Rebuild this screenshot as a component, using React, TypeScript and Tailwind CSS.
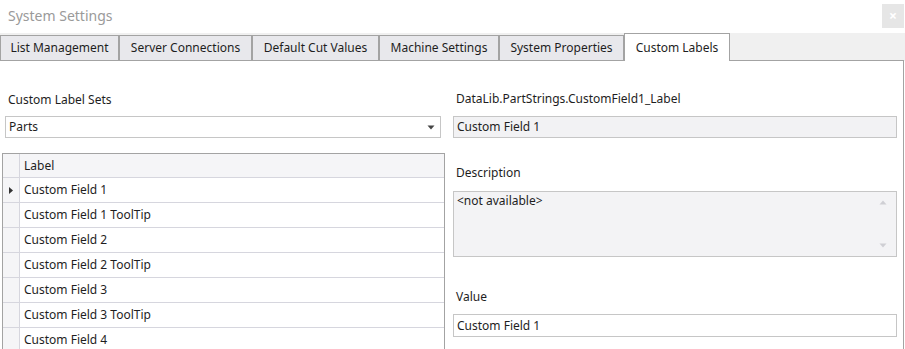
import React from 'react';

const tabs = [
  { label: 'List Management', w: 'w-[119px]' },
  { label: 'Server Connections', w: 'w-[133px]' },
  { label: 'Default Cut Values', w: 'w-[127px]' },
  { label: 'Machine Settings', w: 'w-[120px]' },
  { label: 'System Properties', w: 'w-[125px]' },
];

const rows = [
  'Custom Field 1',
  'Custom Field 1 ToolTip',
  'Custom Field 2',
  'Custom Field 2 ToolTip',
  'Custom Field 3',
  'Custom Field 3 ToolTip',
  'Custom Field 4',
];

export default function App() {
  return (
    <div className="w-[905px] h-[349px] overflow-hidden bg-white text-[12px] text-[#1e1e1e] font-['Noto_Sans',sans-serif]">
      {/* title bar */}
      <div className="h-[33px] flex justify-between items-start">
        <div className="pl-[8px] pt-[5px] text-[14px] text-[#9a9a9a]">System Settings</div>
        <div className="mt-[4px] mr-[1px] w-[22px] h-[24px] bg-[#e6e6e6] flex items-center justify-center text-white text-[14px] font-bold leading-none">
          ×
        </div>
      </div>

      {/* tab strip */}
      <div className="h-[28px] bg-[#f0f0f0] flex items-end">
        {tabs.map((t) => (
          <div
            key={t.label}
            className={`${t.w} h-[26px] shrink-0 border border-[#a3a3a3] bg-[#e8e8ec] flex items-center justify-center`}
          >
            {t.label}
          </div>
        ))}
        <div className="w-[106px] h-[28px] shrink-0 border border-b-0 border-[#a3a3a3] bg-white flex items-center justify-center">
          Custom Labels
        </div>
        <div className="flex-1 h-[1px] mr-[1px] bg-[#a3a3a3]" />
      </div>

      {/* content */}
      <div className="flex h-[288px] mr-[1px] border-r border-[#a3a3a3] overflow-hidden">
        {/* left column */}
        <div className="w-[447px] shrink-0 flex flex-col">
          <div className="shrink-0 pl-[8px] pt-[31px] h-[55px] leading-[16px]">Custom Label Sets</div>
          <div className="shrink-0 ml-[5px] w-[436px] h-[22px] border border-[#c6c6c6] flex items-center justify-between pl-[3px] pr-[5px]">
            <span>Parts</span>
            <svg width="8" height="5" viewBox="0 0 8 5">
              <path d="M0.5 0.5h7L4 4.5z" fill="#444" />
            </svg>
          </div>
          <div className="shrink-0 mt-[15px] ml-[2px] w-[443px] border-t border-x border-[#a3a3a3] flex flex-col">
            <div className="shrink-0 flex h-[24px] border-b border-[#d6d6de]">
              <div className="w-[17px] bg-[#f5f5f7] border-r border-[#d6d6de]" />
              <div className="flex-1 pl-[4px] flex items-center bg-[#f5f5f7]">Label</div>
            </div>
            {rows.map((r, i) => (
              <div key={r} className="shrink-0 flex h-[25px] border-b border-[#d6d6de]">
                <div className="w-[17px] bg-[#f5f5f7] border-r border-[#d6d6de] flex items-center justify-center">
                  {i === 0 && (
                    <svg width="4" height="7" viewBox="0 0 4 7">
                      <path d="M0 0L4 3.5L0 7z" fill="#333" />
                    </svg>
                  )}
                </div>
                <div className="flex-1 pl-[4px] flex items-center">{r}</div>
              </div>
            ))}
          </div>
        </div>

        {/* right column */}
        <div className="w-[444px] shrink-0 ml-[6px] flex flex-col">
          <div className="shrink-0 pl-[3px] pt-[30px] h-[55px] leading-[16px]">DataLib.PartStrings.CustomField1_Label</div>
          <div className="shrink-0 h-[22px] border border-[#c6c6c6] bg-[#f2f2f4] flex items-center pl-[3px]">Custom Field 1</div>
          <div className="shrink-0 pl-[3px] pt-[27px] h-[53px] leading-[16px]">Description</div>
          <div className="shrink-0 h-[66px] border border-[#c6c6c6] bg-[#f3f3f5] flex justify-between pl-[3px] pr-[9px]">
            <span className="leading-[16px] pt-[1px]">&lt;not available&gt;</span>
            <div className="flex flex-col justify-between py-[8px]">
              <svg width="8" height="5" viewBox="0 0 8 5">
                <path d="M0.5 4.5h7L4 0.5z" fill="#cfcfd4" />
              </svg>
              <svg width="8" height="5" viewBox="0 0 8 5">
                <path d="M0.5 0.5h7L4 4.5z" fill="#cfcfd4" />
              </svg>
            </div>
          </div>
          <div className="shrink-0 pl-[3px] pt-[32px] h-[57px] leading-[16px]">Value</div>
          <div className="shrink-0 h-[23px] border border-[#c6c6c6] bg-white flex items-center pl-[3px]">Custom Field 1</div>
        </div>
      </div>
    </div>
  );
}
